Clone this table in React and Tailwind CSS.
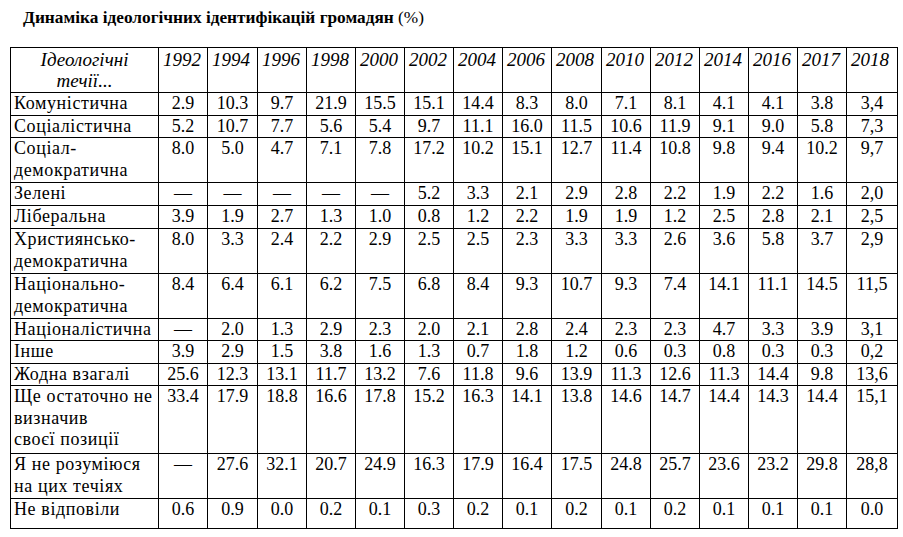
import React from 'react';

const years = ['1992', '1994', '1996', '1998', '2000', '2002', '2004', '2006', '2008', '2010', '2012', '2014', '2016', '2017', '2018'];
const cols = ['w-[49px]', 'w-[50px]', 'w-[49px]', 'w-[49px]', 'w-[49px]', 'w-[49px]', 'w-[49px]', 'w-[49px]', 'w-[50px]', 'w-[49px]', 'w-[49px]', 'w-[49px]', 'w-[49px]', 'w-[49px]', 'w-[51px]'];

// рядки таблиці: назва (масив рядків), клас висоти, значення
const rows = [
  { name: ['Комуністична'], h: 'h-[23px]', v: ['2.9', '10.3', '9.7', '21.9', '15.5', '15.1', '14.4', '8.3', '8.0', '7.1', '8.1', '4.1', '4.1', '3.8', '3,4'] },
  { name: ['Соціалістична'], h: 'h-[22px]', v: ['5.2', '10.7', '7.7', '5.6', '5.4', '9.7', '11.1', '16.0', '11.5', '10.6', '11.9', '9.1', '9.0', '5.8', '7,3'] },
  { name: ['Соціал-', 'демократична'], h: 'h-[45px]', v: ['8.0', '5.0', '4.7', '7.1', '7.8', '17.2', '10.2', '15.1', '12.7', '11.4', '10.8', '9.8', '9.4', '10.2', '9,7'] },
  { name: ['Зелені'], h: 'h-[23px]', v: ['—', '—', '—', '—', '—', '5.2', '3.3', '2.1', '2.9', '2.8', '2.2', '1.9', '2.2', '1.6', '2,0'] },
  { name: ['Ліберальна'], h: 'h-[23px]', v: ['3.9', '1.9', '2.7', '1.3', '1.0', '0.8', '1.2', '2.2', '1.9', '1.9', '1.2', '2.5', '2.8', '2.1', '2,5'] },
  { name: ['Християнсько-', 'демократична'], h: 'h-[45px]', v: ['8.0', '3.3', '2.4', '2.2', '2.9', '2.5', '2.5', '2.3', '3.3', '3.3', '2.6', '3.6', '5.8', '3.7', '2,9'] },
  { name: ['Національно-', 'демократична'], h: 'h-[45px]', v: ['8.4', '6.4', '6.1', '6.2', '7.5', '6.8', '8.4', '9.3', '10.7', '9.3', '7.4', '14.1', '11.1', '14.5', '11,5'] },
  { name: ['Націоналістична'], h: 'h-[22px]', v: ['—', '2.0', '1.3', '2.9', '2.3', '2.0', '2.1', '2.8', '2.4', '2.3', '2.3', '4.7', '3.3', '3.9', '3,1'] },
  { name: ['Інше'], h: 'h-[23px]', v: ['3.9', '2.9', '1.5', '3.8', '1.6', '1.3', '0.7', '1.8', '1.2', '0.6', '0.3', '0.8', '0.3', '0.3', '0,2'] },
  { name: ['Жодна взагалі'], h: 'h-[22px]', v: ['25.6', '12.3', '13.1', '11.7', '13.2', '7.6', '11.8', '9.6', '13.9', '11.3', '12.6', '11.3', '14.4', '9.8', '13,6'] },
  { name: ['Ще остаточно не', 'визначив', 'своєї позиції'], h: 'h-[68px]', v: ['33.4', '17.9', '18.8', '16.6', '17.8', '15.2', '16.3', '14.1', '13.8', '14.6', '14.7', '14.4', '14.3', '14.4', '15,1'] },
  { name: ['Я не розуміюся', 'на цих течіях'], h: 'h-[45px]', v: ['—', '27.6', '32.1', '20.7', '24.9', '16.3', '17.9', '16.4', '17.5', '24.8', '25.7', '23.6', '23.2', '29.8', '28,8'] },
  { name: ['Не відповіли'], h: 'h-[30px]', v: ['0.6', '0.9', '0.0', '0.2', '0.1', '0.3', '0.2', '0.1', '0.2', '0.1', '0.2', '0.1', '0.1', '0.1', '0.0'] },
];

export default function App() {
  return (
    <div className="w-[903px] h-[537px] bg-white text-black font-['Liberation_Serif'] overflow-hidden">
      <h1 className="pl-[23px] pt-[8px] h-[47px] text-[17.3px] leading-[20px]">
        <span className="font-bold">Динаміка ідеологічних ідентифікацій громадян</span> (%)
      </h1>
      <table className="ml-[10px] w-[887px] table-fixed border-collapse text-[18px] leading-[21px]">
        <colgroup>
          <col className="w-[148px]" />
          {cols.map((c, i) => (
            <col key={i} className={c} />
          ))}
        </colgroup>
        <thead>
          <tr className="h-[45px]">
            <th className="border border-black align-top font-normal italic text-center text-[19px] leading-[21px] pt-[1px]">
              Ідеологічні
              <br />
              течії...
            </th>
            {years.map((y) => (
              <th key={y} className="border border-black align-top font-normal italic text-left pl-[4px] text-[19px] leading-[21px] pt-[1px]">
                {y}
              </th>
            ))}
          </tr>
        </thead>
        <tbody>
          {rows.map((r) => (
            <tr key={r.name[0]} className={r.h}>
              <td className={`border border-black align-top pl-[3px] whitespace-nowrap tracking-[0.6px] ${r.name.length > 1 ? 'leading-[21.5px]' : 'leading-[21px]'}`}>
                {r.name.map((n, i) => (
                  <div key={i}>{n}</div>
                ))}
              </td>
              {r.v.map((v, i) => (
                <td key={i} className="border border-black align-top text-center">
                  {v}
                </td>
              ))}
            </tr>
          ))}
        </tbody>
      </table>
    </div>
  );
}
